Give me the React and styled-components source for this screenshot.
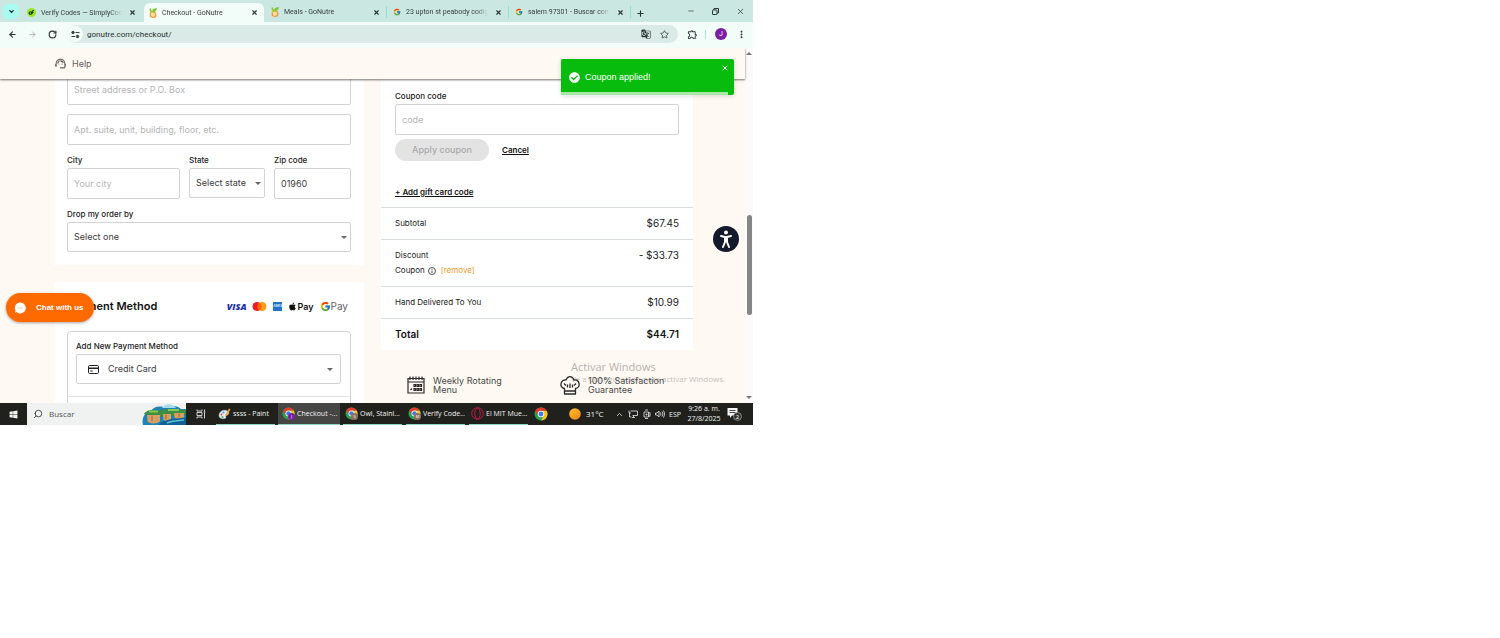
import React, { useState } from 'react';
import styled, { createGlobalStyle, css } from 'styled-components';
import { ArrowLeft, ArrowRight, ChevronDown, ChevronUp, Minus, Plus, RotateCw, Search, Star, X } from 'lucide-react';
import { FaApple, FaCheckCircle, FaWindows } from 'react-icons/fa';
import { FcGoogle } from 'react-icons/fc';
import { MdGTranslate, MdMoreVert, MdOutlineExtension, MdSupportAgent } from 'react-icons/md';

const GlobalStyle = createGlobalStyle`
  *, *::before, *::after {
    box-sizing: border-box;
  }

  body {
    margin: 0;
    background: #fff;
  }

  button, input, select {
    margin: 0;
    padding: 0;
    border: 0;
    background: none;
    color: inherit;
    font: inherit;
  }

  svg {
    display: block;
    flex: none;
  }
`;

const system = css`
  font-family: 'Open Sans', 'Noto Sans', sans-serif;
`;

const chrome = css`
  font-family: Roboto, 'Open Sans', sans-serif;
`;

/* ---------- browser chrome ---------- */

const Desktop = styled.div`
  width: 50.2%;
  overflow: hidden;
`;

const TabStrip = styled.div`
  ${chrome}
  display: flex;
  align-items: flex-end;
  height: 22px;
  padding-left: 3px;
  background: #cbe7e1;
  color: #33413f;
  font-size: 7px;
`;

const TabSearch = styled.button`
  display: grid;
  place-items: center;
  flex: none;
  width: 16px;
  height: 15px;
  margin: 0 3px 3px 0;
  border-radius: 5px;
  background: #a8fbee;
  color: #10201e;
`;

const Tab = styled.div`
  display: flex;
  align-items: center;
  flex: 0 1 120px;
  min-width: 0;
  height: 19px;
  margin-right: 2px;
  padding: 0 4px 0 5px;
  border-radius: 6px 6px 0 0;
  background: ${({ $active }) => ($active ? '#f2fcf9' : 'transparent')};
  ${({ $divided }) => $divided && css`
    height: 12px;
    margin-bottom: 4px;
    border-radius: 0;
    box-shadow: 1px 0 0 #8fe3d0;
  `}
`;

const TabTitle = styled.button`
  flex: 1;
  min-width: 0;
  margin-left: 5px;
  overflow: hidden;
  text-align: left;
  white-space: nowrap;
  line-height: 12px;
  mask-image: linear-gradient(to right, #000 85%, transparent);
`;

const IconButton = styled.button`
  display: grid;
  place-items: center;
  flex: none;
  width: ${({ $width }) => $width || 20}px;
  height: 18px;
  color: ${({ $muted }) => ($muted ? '#9aa8a5' : '#2a3836')};
`;

const CloseTab = styled(IconButton)`
  width: 12px;
  height: 12px;
  margin-left: 4px;
`;

const WindowControls = styled.div`
  display: flex;
  align-self: center;
  margin-left: auto;
`;

const Toolbar = styled.div`
  ${chrome}
  display: flex;
  align-items: center;
  height: 26px;
  padding: 0 2px 2px;
  background: #f2fcf9;
`;

const AddressBar = styled.div`
  display: flex;
  align-items: center;
  flex: 1;
  height: 18px;
  margin: 0 5px;
  padding: 0 5px 0 0;
  border-radius: 9px;
  background: #daebe7;
`;

const SiteInfo = styled.button`
  display: grid;
  place-items: center;
  width: 16px;
  height: 16px;
  border-radius: 50%;
  background: #f2fcf9;
`;

const AddressInput = styled.input`
  flex: 1;
  min-width: 0;
  padding-left: 4px;
  color: #27312f;
  font-size: 8px;
`;

const ToolbarDivider = styled.span`
  width: 1px;
  height: 9px;
  margin: 0 5px 0 4px;
  background: #a5e9da;
`;

const Profile = styled.button`
  width: 12px;
  height: 12px;
  margin: 0 4px;
  border-radius: 50%;
  background: #7b1fa2;
  color: #fff;
  font-size: 7px;
  line-height: 12px;
`;

/* ---------- checkout page ---------- */

const Viewport = styled.div`
  position: relative;
  display: flex;
  height: 355px;
  overflow: hidden;
  background: #fff9f3;
  color: #222;
  font-family: Inter, 'Open Sans', sans-serif;
  font-size: 8px;
`;

const Page = styled.div`
  flex: 1;
  min-width: 0;
`;

const PageHeader = styled.header`
  position: relative;
  z-index: 1;
  display: flex;
  align-items: center;
  height: 31px;
  padding-left: 54px;
  background: #fff9f4;
  box-shadow: 0 1px 2px rgba(0, 0, 0, 0.55);
`;

const HelpLink = styled.a`
  display: flex;
  align-items: center;
  gap: 5px;
  color: #68635f;
  font-size: 9px;
  text-decoration: none;
`;

const Columns = styled.main`
  display: grid;
  grid-template-columns: 310fr 312fr;
  align-items: start;
  gap: 17px;
  margin-top: -5px;
  padding: 0 52px 0 54px;
`;

const Stack = styled.div`
  display: grid;
  gap: ${({ $gap }) => $gap}px;
`;

const Card = styled.section`
  padding: 0 13px 13px;
  background: #fff;
`;

const FieldGroup = styled.div`
  min-width: 0;
`;

const Label = styled.label`
  display: block;
  margin-bottom: 2px;
  color: #222;
  font-weight: 500;
  line-height: 12px;
`;

const box = css`
  width: 100%;
  border: 1px solid #d3d3d3;
  border-radius: 2px;
  background: #fff;
  color: #3c3c3c;
  font-size: 9px;
`;

const Input = styled.input`
  ${box}
  display: block;
  height: 31px;
  padding: 0 6px 1px;

  &::placeholder {
    color: #b4b4b4;
  }
`;

const SelectWrap = styled.div`
  display: grid;
  align-items: center;

  > * {
    grid-area: 1 / 1;
  }
`;

const SelectBox = styled.select`
  ${box}
  height: 30px;
  padding: 0 6px 2px;
  padding-left: ${({ $icon }) => ($icon ? 31 : 6)}px;
  appearance: none;
`;

const Caret = styled.span`
  justify-self: end;
  margin-right: ${({ $inset }) => $inset || 4}px;
  border: 3px solid transparent;
  border-top-color: #666;
  border-bottom: 0;
  pointer-events: none;
`;

const SelectIcon = styled.span`
  margin-left: 12px;
  pointer-events: none;
`;

const AddressRow = styled.div`
  display: grid;
  grid-template-columns: 113fr 76fr 77fr;
  gap: 9px;
`;

const PaymentCard = styled(Card)`
  height: 150px;
  padding-top: 16px;
`;

const PaymentHead = styled.div`
  display: flex;
  align-items: center;
  justify-content: space-between;
  height: 16px;
  padding-right: 3px;
`;

const Heading = styled.h2`
  margin: 0;
  color: #111;
  font-size: 11px;
  font-weight: 600;
`;

const Brands = styled.div`
  display: flex;
  align-items: center;
  gap: 6px;
`;

const Visa = styled.span`
  color: #1a2fb5;
  font-family: 'Open Sans', sans-serif;
  font-size: 9px;
  font-style: italic;
  font-weight: 800;
`;

const Amex = styled.span`
  width: 9px;
  height: 9px;
  background: #2573c4;
  color: #cfe3f7;
  font-size: 3px;
  font-weight: 700;
  line-height: 9px;
  text-align: center;
`;

const Pay = styled.span`
  display: flex;
  align-items: center;
  color: ${({ $light }) => ($light ? '#5f6368' : '#111')};
  font-size: ${({ $light }) => ($light ? 10 : 9)}px;
  font-weight: ${({ $light }) => ($light ? 400 : 600)};
`;

const MethodBox = styled.div`
  margin-top: 17px;
  border: 1px solid #d3d3d3;
  border-radius: 4px;
`;

const MethodTop = styled.div`
  padding: 8px 9px 12px 8px;
  border-bottom: 1px solid #e4e4e4;
`;

const MethodRest = styled.div`
  height: 60px;
`;

const Summary = styled.section`
  padding-top: 16px;
  background: #fff;
`;

const CouponForm = styled.form`
  padding: 0 14px;
`;

const CouponActions = styled.div`
  display: flex;
  align-items: center;
  gap: 13px;
  margin-top: 4px;
`;

const ApplyButton = styled.button`
  width: 94px;
  height: 22px;
  padding-bottom: 2px;
  border-radius: 11px;
  background: #e3e3e3;
  color: #a9a9a9;
  font-size: 9px;
  font-weight: 500;
`;

const TextButton = styled.button`
  color: #111;
  font-weight: 600;
  line-height: 14px;
  text-decoration: underline;
`;

const GiftButton = styled(TextButton)`
  display: block;
  margin: 24px 0 8px;
`;

const Row = styled.div`
  display: flex;
  justify-content: space-between;
  padding: 8px 14px;
  border-top: 1px solid #d9dfdf;
  line-height: 15px;
`;

const TotalRow = styled(Row)`
  font-size: 10px;
  font-weight: 600;
  color: #111;
`;

const Amount = styled.span`
  font-size: 10px;
`;

const CouponLine = styled.div`
  display: flex;
  align-items: center;
  gap: 3px;
`;

const RemoveLink = styled.a`
  margin-left: 2px;
  color: #f39a2b;
  text-decoration: none;
`;

const Features = styled.div`
  position: relative;
  z-index: 1;
  display: grid;
  grid-template-columns: 153fr 133fr;
  padding: 25px 0 0 26px;
`;

const Feature = styled.div`
  display: flex;
  align-items: center;
  gap: 8px;
  color: #4a4a4a;
  font-size: 9px;
  line-height: 9px;
  white-space: pre-line;
`;

const Scrollbar = styled.div`
  display: flex;
  flex-direction: column;
  align-items: center;
  width: 8px;
  padding: 4px 0;
  background: #fcfbfa;
`;

const ScrollArrow = styled.span`
  border: 3px solid transparent;
  ${({ $up }) => ($up ? 'border-top: 0; border-bottom-color: #777;' : 'border-bottom: 0; border-top-color: #777; margin-top: auto;')}
`;

const ScrollThumb = styled.span`
  width: 5px;
  height: 100px;
  margin-top: 160px;
  border-radius: 3px;
  background: #858585;
`;

/* ---------- things that float over the page ---------- */

const Toast = styled.div`
  position: absolute;
  z-index: 3;
  top: 11px;
  right: 19px;
  display: flex;
  align-items: center;
  gap: 5px;
  width: 173px;
  height: 36px;
  padding-left: 8px;
  overflow: hidden;
  border-radius: 2px;
  background: #07bc0c;
  box-shadow: 0 1px 5px rgba(0, 0, 0, 0.15);
  color: #fff;
  font-family: 'Liberation Sans', Arial, sans-serif;
  font-size: 9px;
`;

const ToastProgress = styled.span`
  position: absolute;
  right: 6px;
  bottom: 0;
  left: 0;
  height: 3px;
  background: #a5e8a7;
`;

const ToastClose = styled.button`
  align-self: flex-start;
  margin: 5px 5px 0 auto;
`;

const ChatButton = styled.button`
  position: absolute;
  z-index: 3;
  left: 6px;
  bottom: 81px;
  display: flex;
  align-items: center;
  gap: 10px;
  width: 88px;
  height: 29px;
  padding-left: 8px;
  border-radius: 15px;
  background: #ff6a00;
  box-shadow: 0 1px 3px rgba(0, 0, 0, 0.35);
  color: #fff;
  font-family: 'Liberation Sans', Arial, sans-serif;
  font-weight: 700;
  white-space: nowrap;
`;

const AccessButton = styled.button`
  position: absolute;
  z-index: 3;
  top: 178px;
  right: 14px;
  width: 26px;
  height: 26px;
  border-radius: 50%;
  background: #121a2b;
`;

const Watermark = styled.div`
  ${system}
  position: absolute;
  left: 571px;
  bottom: 18px;
  color: #c4c0bc;
  line-height: 12px;
  white-space: nowrap;
`;

const WatermarkTitle = styled.div`
  color: #b5b1ad;
  font-size: 11px;
`;

/* ---------- taskbar ---------- */

const Taskbar = styled.footer`
  ${system}
  display: flex;
  height: 22px;
  background: #20211d;
  color: #f2f2f2;
  font-size: 7px;
`;

const TaskIcon = styled.button`
  display: grid;
  place-items: center;
  flex: none;
  width: ${({ $width }) => $width}px;
`;

const SearchBox = styled.label`
  display: flex;
  align-items: center;
  flex: 0 1 159px;
  min-width: 0;
  padding-left: 6px;
  background: #f0f1f1;
  color: #333;

  input {
    flex: 1;
    min-width: 0;
    padding: 0 0 2px 6px;
    font-size: 8px;
  }

  input::placeholder {
    color: #555;
  }
`;

const MirroredSearch = styled(Search)`
  transform: scaleX(-1);
`;

const Task = styled.button`
  display: flex;
  align-items: center;
  gap: 2px;
  flex: 0 1 59px;
  min-width: 0;
  margin-right: 4px;
  padding-left: 2px;
  overflow: hidden;
  border-bottom: 1px solid #8ed3c4;
  white-space: nowrap;
  ${({ $active }) => $active && 'flex-basis: 62px; margin: 0 3px 0 -1px; padding-left: 4px; background: #464744;'}
`;

const Weather = styled.button`
  display: flex;
  align-items: center;
  gap: 5px;
  margin-left: 19px;
  padding-bottom: 1px;
  font-size: 8px;
`;

const Tray = styled.div`
  display: flex;
  align-items: center;
  gap: 4px;
  margin-left: auto;
`;

const Clock = styled.time`
  width: 38px;
  line-height: 10px;
  text-align: center;
`;

const Notifications = styled.button`
  width: 26px;
`;

/* ---------- drawings ---------- */

const Carrot = () => (
  <svg width="8" height="10" viewBox="0 0 16 20" fill="none">
    <path d="M7 7C3 7 2 4 3 1M8 7c0-4 3-5 6-5-1 3-2 5-6 5" stroke="#84c52f" strokeWidth="3" />
    <rect x="2.5" y="8.5" width="11" height="10" rx="4" fill="#fbe0a8" stroke="#f2902f" strokeWidth="2.4" />
    <path d="M3 12V9h5" stroke="#b7cf3a" strokeWidth="2.4" />
  </svg>
);

const SimplyMark = () => (
  <svg width="9" height="9" viewBox="0 0 18 18">
    <circle cx="9" cy="9" r="9" fill="#9be52c" />
    <circle cx="7" cy="10" r="2.5" fill="none" stroke="#173a08" strokeWidth="2.4" />
    <path d="M10 12V8q0-3 4-3M9 9h4" fill="none" stroke="#173a08" strokeWidth="2.4" />
  </svg>
);

const ChromeMark = ({ size = 13, badge, letter }) => (
  <svg width={size} height={size} viewBox="0 0 26 26">
    <circle cx="13" cy="13" r="12" fill="#2ba24c" />
    <path d="M13 7h10.4A12 12 0 0 1 13 25l5.2-9z" fill="#fbc116" />
    <path d="M2.6 7A12 12 0 0 1 23.4 7H13L7.8 16z" fill="#e33b2e" />
    <circle cx="13" cy="13" r="6" fill="#fff" />
    <circle cx="13" cy="13" r="4.6" fill="#3f7de8" />
    {badge && <circle cx="19" cy="19" r="7" fill={badge} />}
    {letter && <text x="19" y="22" fill="#fff" fontSize="8" textAnchor="middle">{letter}</text>}
  </svg>
);

const Sliders = () => (
  <svg width="9" height="9" viewBox="0 0 18 18" fill="none" stroke="#35423f" strokeWidth="2">
    <path d="M9 5h8M1 13h7" />
    <circle cx="4" cy="5" r="2.4" fill="#35423f" />
    <circle cx="13" cy="13" r="2.4" fill="#35423f" />
  </svg>
);

const Restore = () => (
  <svg width="7" height="7" viewBox="0 0 14 14" fill="none" stroke="currentColor" strokeWidth="2">
    <rect x="1" y="4" width="9" height="9" rx="1" />
    <path d="M4 4V1h9v9h-3" />
  </svg>
);

const Mastercard = () => (
  <svg width="15" height="9" viewBox="0 0 30 18">
    <circle cx="10" cy="9" r="9" fill="#eb1c23" />
    <circle cx="20" cy="9" r="9" fill="#f79e1b" />
    <path d="M15 1.5a9 9 0 0 1 0 15 9 9 0 0 1 0-15z" fill="#ff5f00" />
  </svg>
);

const CardGlyph = () => (
  <svg width="11" height="9" viewBox="0 0 22 18" fill="none" stroke="#222" strokeWidth="2">
    <rect x="1" y="1" width="20" height="16" rx="2.5" />
    <path d="M1 6.5h20" strokeWidth="3" />
    <path d="M4.5 12h5" />
  </svg>
);

const Info = () => (
  <svg width="8" height="8" viewBox="0 0 16 16" fill="none" stroke="#222" strokeWidth="1.6">
    <circle cx="8" cy="8" r="7" />
    <path d="M8 7v5M8 4v1.5" />
  </svg>
);

const CalendarGlyph = () => (
  <svg width="18" height="18" viewBox="0 0 36 36" fill="none" stroke="#2b2b2b" strokeWidth="2.4">
    <path d="M2 5h32v29H2zM2 12h32" />
    <path d="M6 1v7M12 1v7M18 1v7M24 1v7M30 1v7" />
    <path d="M14 17h3v4h-3zM20 17h3v4h-3zM26 17h3v4h-3zM14 25h3v4h-3zM20 25h3v4h-3zM26 25h3v4h-3zM7 28l3-3" />
  </svg>
);

const ChefHatGlyph = () => (
  <svg width="20" height="20" viewBox="0 0 40 40" fill="none" stroke="#2b2b2b" strokeWidth="2.6" strokeLinejoin="round">
    <path d="M9 38V27C3 26 1 21 2 17c1-5 6-8 10-7 3-9 13-9 16 0 5-1 9 2 10 7 1 5-1 9-7 10v11zM9 32h22" />
    <path d="M15 19v6M20 17v9M25 19v6M8 17l4 4M32 17l-4 4" />
  </svg>
);

const PersonGlyph = () => (
  <svg width="26" height="26" viewBox="0 0 26 26" fill="none" stroke="#fff" strokeWidth="2" strokeLinecap="round" strokeLinejoin="round">
    <circle cx="13" cy="6.5" r="2" fill="#fff" stroke="none" />
    <path d="M8 10l4 1h2l4-1M12 11v5l-2 5M14 11v5l2 5M13 11v4" />
  </svg>
);

const ChatGlyph = () => (
  <svg width="12" height="12" viewBox="0 0 24 24">
    <path d="M12 1a11 11 0 1 1-7 19l-3 2 1-5A11 11 0 0 1 12 1z" fill="#fff" />
    <path d="M7 12h2M11 12h2M15 12h2" stroke="#ff9a50" strokeWidth="2" />
  </svg>
);

const Island = () => (
  <svg width="44" height="22" viewBox="0 0 88 44">
    <path d="M2 44C-1 32 4 18 18 16c6-10 20-11 30-6 10-7 24-4 30 2h10v32z" fill="#1f83b5" />
    <path d="M40 10c8-11 22-9 28 0z" fill="#a9d9ea" />
    <path d="M4 22c6-10 22-9 32-7 16-6 38-2 52-1v9c-22 4-62 8-84-1z" fill="#3f8c45" />
    <path d="M10 24h26v13c-7 5-20 5-25 0zM42 22h16v12c-5 3-11 3-15 0zM64 20h20v9c-6 4-14 4-19 0z" fill="#d79f62" />
    <path d="M20 25v11M48 23v10M74 21v8" stroke="#b37c48" strokeWidth="3" />
    <path d="M36 40c16-9 34-9 52-11v15H34z" fill="#126196" />
    <path d="M50 40c12-5 22-5 34-6" stroke="#54c2d3" strokeWidth="3" fill="none" />
    <path d="M14 17h18M52 14h22" stroke="#7fca55" strokeWidth="4" />
  </svg>
);

const TaskViewGlyph = () => (
  <svg width="10" height="10" viewBox="0 0 20 20" fill="none" stroke="#e5e5e5" strokeWidth="1.8">
    <path d="M2 1v3h10V1M2 19v-3h10v3M2 7h10v6H2zM17 1v3M17 8v11" />
    <path d="M15.5 6h3" strokeWidth="3" />
  </svg>
);

const PaintGlyph = () => (
  <svg width="13" height="13" viewBox="0 0 26 26">
    <path d="M2 17C2 9 10 5 17 7c7 3 5 9 1 9-3 0-3 3-2 5 0 3-14 5-14-4z" fill="#e4eef5" stroke="#9fb9c8" />
    <circle cx="7" cy="15" r="2" fill="#e5483c" />
    <circle cx="11" cy="11" r="2" fill="#3b9ae1" />
    <circle cx="9" cy="20" r="2" fill="#4fb04c" />
    <path d="m14 17 8-14 3 2-8 13z" fill="#efa52f" />
  </svg>
);

const OperaGlyph = () => (
  <svg width="13" height="13" viewBox="0 0 26 26" fill="none" stroke="#c8174b" strokeWidth="2">
    <circle cx="13" cy="13" r="11.5" />
    <ellipse cx="13" cy="13" rx="5.5" ry="10.5" />
  </svg>
);

const SunGlyph = () => (
  <svg width="12" height="12" viewBox="0 0 12 12">
    <defs>
      <linearGradient id="sun" x2="1" y2="1">
        <stop stopColor="#ffc62e" />
        <stop offset="1" stopColor="#f07c12" />
      </linearGradient>
    </defs>
    <circle cx="6" cy="6" r="5.8" fill="url(#sun)" />
  </svg>
);

const TrayGlyph = ({ d, width = 9 }) => (
  <svg width={width} height="10" viewBox={`0 0 ${width * 2} 20`} fill="none" stroke="#e8e8e8" strokeWidth="1.6">
    <path d={d} />
  </svg>
);

const NotificationGlyph = () => (
  <svg width="15" height="14" viewBox="0 0 30 28">
    <path d="M1 2h20v15H10l-4 5v-5H1z" fill="#f5f5f5" />
    <path d="M5 7h12M5 11h12" stroke="#20211d" strokeWidth="1.6" />
    <circle cx="21" cy="19" r="8" fill="#33342f" stroke="#aaa" strokeWidth="1.4" />
    <text x="21" y="23" fill="#fff" fontSize="12" textAnchor="middle">2</text>
  </svg>
);

/* ---------- data ---------- */

const tabs = [
  { title: 'Verify Codes — SimplyCodes', icon: <SimplyMark /> },
  { title: 'Checkout - GoNutre', icon: <Carrot />, active: true },
  { title: 'Meals - GoNutre', icon: <Carrot />, divided: true },
  { title: '23 upton st peabody codigo', icon: <FcGoogle size={8} />, divided: true },
  { title: 'salem 97301 - Buscar con Go', icon: <FcGoogle size={8} />, divided: true },
];

const tasks = [
  { title: 'ssss - Paint', icon: <PaintGlyph /> },
  { title: 'Checkout -...', icon: <ChromeMark badge="#7b1fa2" letter="J" />, active: true },
  { title: 'Owl, Stainl...', icon: <ChromeMark badge="#8d6e63" letter="S" /> },
  { title: 'Verify Code...', icon: <ChromeMark badge="#8d6e63" letter="M" /> },
  { title: 'El MIT Mue...', icon: <OperaGlyph /> },
];

const Select = ({ id, option, icon, inset }) => (
  <SelectWrap>
    <SelectBox id={id} $icon={Boolean(icon)}>
      <option>{option}</option>
    </SelectBox>
    {icon && <SelectIcon>{icon}</SelectIcon>}
    <Caret $inset={inset} />
  </SelectWrap>
);

const Browser = () => (
  <>
    <TabStrip>
      <TabSearch aria-label="Search tabs"><ChevronDown size={7} strokeWidth={4} /></TabSearch>
      {tabs.map(({ title, icon, active, divided }) => (
        <Tab key={title} $active={active} $divided={divided}>
          {icon}
          <TabTitle>{title}</TabTitle>
          <CloseTab aria-label="Close tab"><X size={7} strokeWidth={4} /></CloseTab>
        </Tab>
      ))}
      <IconButton $width={16} aria-label="New tab"><Plus size={9} strokeWidth={3} /></IconButton>
      <WindowControls>
        <IconButton $width={25} aria-label="Minimize"><Minus size={8} /></IconButton>
        <IconButton $width={25} aria-label="Restore"><Restore /></IconButton>
        <IconButton $width={25} aria-label="Close"><X size={9} /></IconButton>
      </WindowControls>
    </TabStrip>
    <Toolbar>
      <IconButton aria-label="Back"><ArrowLeft size={9} strokeWidth={3} /></IconButton>
      <IconButton $muted aria-label="Forward"><ArrowRight size={9} strokeWidth={2} /></IconButton>
      <IconButton aria-label="Reload"><RotateCw size={9} strokeWidth={3} /></IconButton>
      <AddressBar>
        <SiteInfo aria-label="Site information"><Sliders /></SiteInfo>
        <AddressInput aria-label="Address" defaultValue="gonutre.com/checkout/" />
        <IconButton $width={18} aria-label="Translate"><MdGTranslate size={10} /></IconButton>
        <IconButton $width={18} aria-label="Bookmark"><Star size={9} strokeWidth={2} /></IconButton>
      </AddressBar>
      <IconButton $width={18} aria-label="Extensions"><MdOutlineExtension size={11} /></IconButton>
      <ToolbarDivider />
      <Profile aria-label="Profile">J</Profile>
      <IconButton aria-label="Menu"><MdMoreVert size={11} /></IconButton>
    </Toolbar>
  </>
);

const ShippingForm = () => (
  <Card>
    <Stack $gap={9}>
      <Input aria-label="Street address" placeholder="Street address or P.O. Box" />
      <Input aria-label="Apartment" placeholder="Apt. suite, unit, building, floor, etc." />
      <AddressRow>
        <FieldGroup>
          <Label htmlFor="city">City</Label>
          <Input id="city" placeholder="Your city" />
        </FieldGroup>
        <FieldGroup>
          <Label htmlFor="state">State</Label>
          <Select id="state" option="Select state" />
        </FieldGroup>
        <FieldGroup>
          <Label htmlFor="zip">Zip code</Label>
          <Input id="zip" defaultValue="01960" />
        </FieldGroup>
      </AddressRow>
      <FieldGroup>
        <Label htmlFor="drop">Drop my order by</Label>
        <Select id="drop" option="Select one" />
      </FieldGroup>
    </Stack>
  </Card>
);

const Payment = () => (
  <PaymentCard>
    <PaymentHead>
      <Heading>Payment Method</Heading>
      <Brands>
        <Visa>VISA</Visa>
        <Mastercard />
        <Amex>AMEX</Amex>
        <Pay><FaApple size={9} />Pay</Pay>
        <Pay $light><FcGoogle size={11} />Pay</Pay>
      </Brands>
    </PaymentHead>
    <MethodBox>
      <MethodTop>
        <Label htmlFor="method">Add New Payment Method</Label>
        <Select id="method" option="Credit Card" icon={<CardGlyph />} inset={8} />
      </MethodTop>
      <MethodRest />
    </MethodBox>
  </PaymentCard>
);

const OrderSummary = () => (
  <Summary>
    <CouponForm onSubmit={(e) => e.preventDefault()}>
      <Label htmlFor="coupon">Coupon code</Label>
      <Input id="coupon" placeholder="code" />
      <CouponActions>
        <ApplyButton disabled>Apply coupon</ApplyButton>
        <TextButton type="button">Cancel</TextButton>
      </CouponActions>
      <GiftButton type="button">+ Add gift card code</GiftButton>
    </CouponForm>
    <Row>
      <span>Subtotal</span>
      <Amount>$67.45</Amount>
    </Row>
    <Row>
      <div>
        Discount
        <CouponLine>
          Coupon <Info /> <RemoveLink href="#remove">[remove]</RemoveLink>
        </CouponLine>
      </div>
      <Amount>- $33.73</Amount>
    </Row>
    <Row>
      <span>Hand Delivered To You</span>
      <Amount>$10.99</Amount>
    </Row>
    <TotalRow>
      <span>Total</span>
      <Amount>$44.71</Amount>
    </TotalRow>
  </Summary>
);

const WindowsTaskbar = () => (
  <Taskbar>
    <TaskIcon $width={27} aria-label="Start"><FaWindows size={9} /></TaskIcon>
    <SearchBox>
      <MirroredSearch size={10} strokeWidth={2} />
      <input placeholder="Buscar" aria-label="Buscar" />
      <Island />
    </SearchBox>
    <TaskIcon $width={30} aria-label="Task view"><TaskViewGlyph /></TaskIcon>
    {tasks.map(({ title, icon, active }) => (
      <Task key={title} $active={active}>
        {icon}
        {title}
      </Task>
    ))}
    <TaskIcon $width={18} aria-label="Chrome"><ChromeMark size={14} /></TaskIcon>
    <Weather><SunGlyph />31°C</Weather>
    <Tray>
      <ChevronUp size={9} strokeWidth={2} />
      <TrayGlyph width={10} d="M5 4h14v9H9M2 3v5h4M3 8v8h4M11 13v4M8 17h6" />
      <TrayGlyph d="M4 6h9v10H4zM13 9l3-2v8l-3-2M6 2h6M6 19h6M8 10h2v2H8z" />
      <TrayGlyph width={10} d="M1 8h3l4-4v12l-4-4H1zM11 7q2 3 0 6M14 5q4 5 0 10M17 3q5 7 0 14" />
      <span>ESP</span>
      <Clock>9:26 a. m. 27/8/2025</Clock>
      <Notifications aria-label="Notifications"><NotificationGlyph /></Notifications>
    </Tray>
  </Taskbar>
);

const App = () => {
  const [toastOpen, setToastOpen] = useState(true);

  return (
    <Desktop>
      <GlobalStyle />
      <Browser />
      <Viewport>
        <Page>
          <PageHeader>
            <HelpLink href="#help"><MdSupportAgent size={13} />Help</HelpLink>
          </PageHeader>
          <Columns>
            <Stack $gap={17}>
              <ShippingForm />
              <Payment />
            </Stack>
            <div>
              <OrderSummary />
              <Features>
                <Feature><CalendarGlyph />{'Weekly Rotating\nMenu'}</Feature>
                <Feature><ChefHatGlyph />{'100% Satisfaction\nGuarantee'}</Feature>
              </Features>
            </div>
          </Columns>
        </Page>
        <Scrollbar>
          <ScrollArrow $up />
          <ScrollThumb />
          <ScrollArrow />
        </Scrollbar>
        <Watermark>
          <WatermarkTitle>Activar Windows</WatermarkTitle>
          Ve a Configuración para activar Windows.
        </Watermark>
        {toastOpen && (
          <Toast role="status">
            <FaCheckCircle size={11} />
            Coupon applied!
            <ToastClose aria-label="Dismiss" onClick={() => setToastOpen(false)}><X size={8} strokeWidth={3} /></ToastClose>
            <ToastProgress />
          </Toast>
        )}
        <ChatButton><ChatGlyph />Chat with us</ChatButton>
        <AccessButton aria-label="Accessibility"><PersonGlyph /></AccessButton>
      </Viewport>
      <WindowsTaskbar />
    </Desktop>
  );
};

export default App;
